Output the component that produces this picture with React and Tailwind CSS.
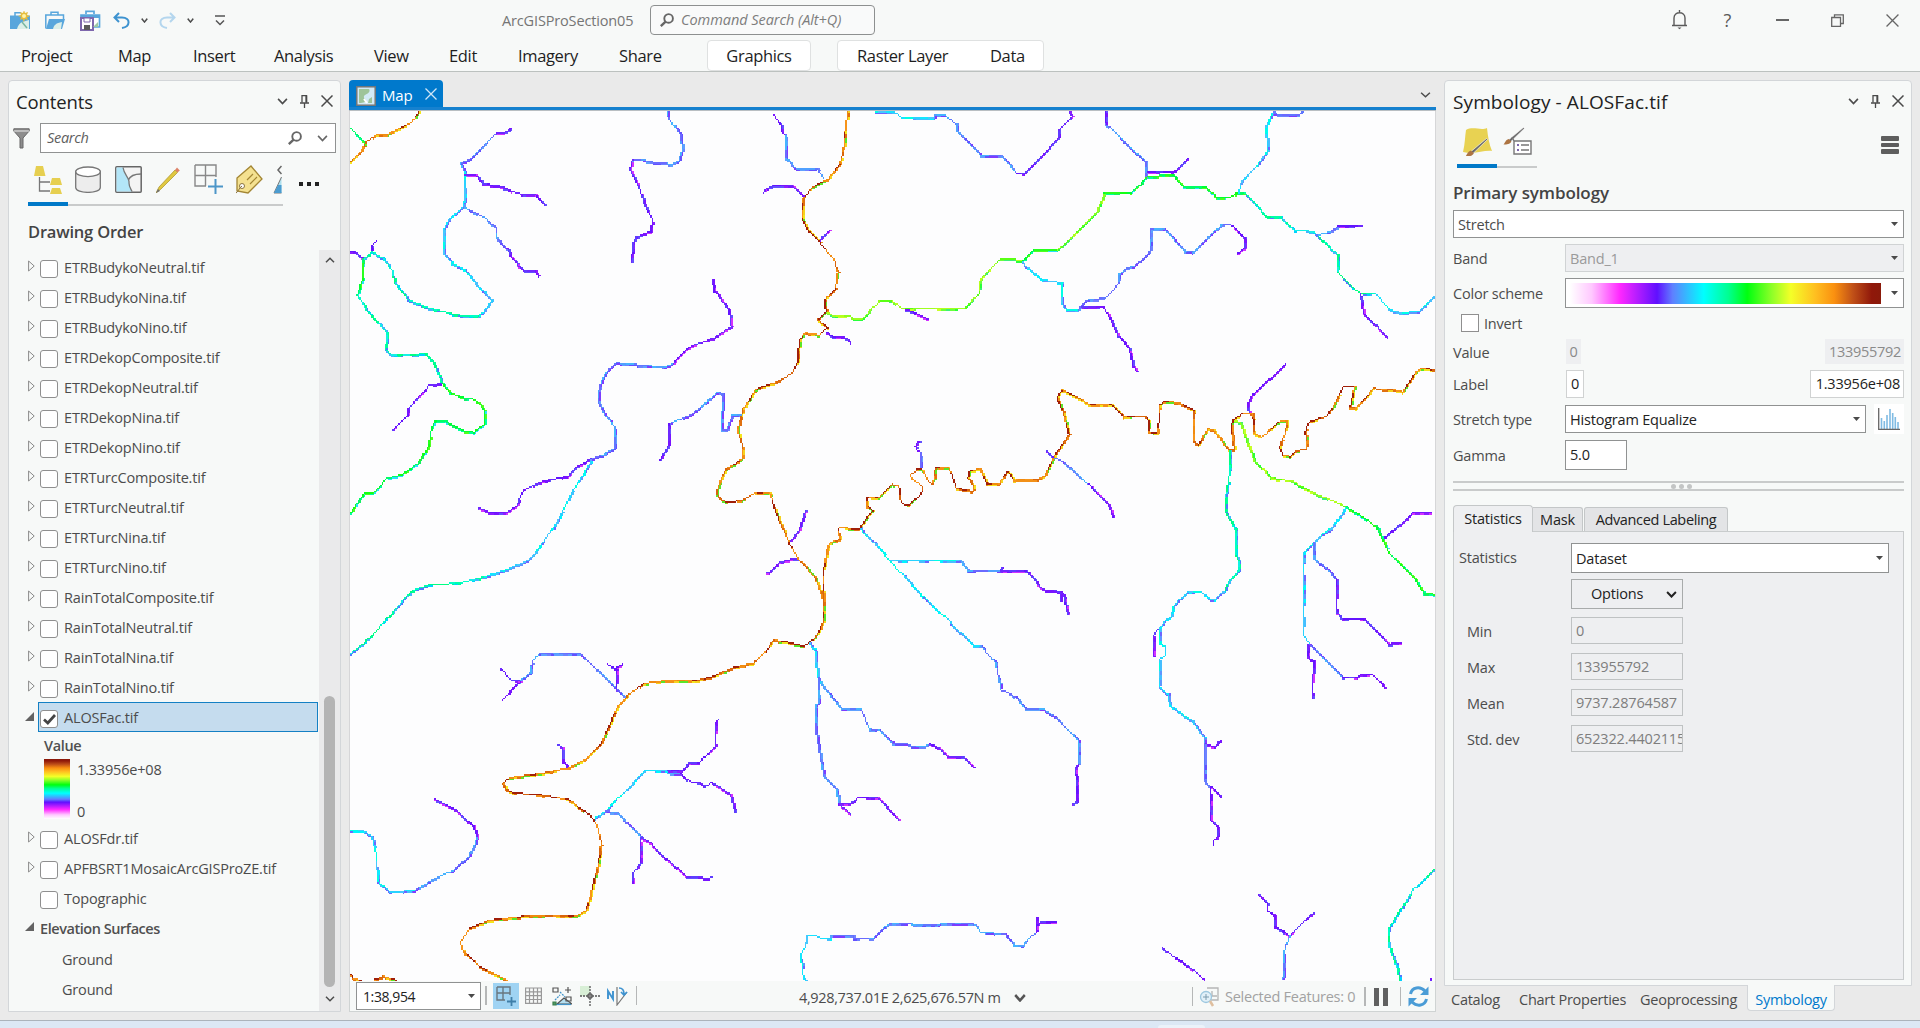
import React from "react";

const RAMP = "#ffffff,#ffc8ff 7%,#ff28ff 16%,#6010ff 28%,#5f80ff 33%,#00ffff 43%,#00ff90 51%,#00ff10 57%,#90ff28 65%,#f4ff28 71%,#ffbe20 79%,#fa9010 85%,#c05018 91%,#90180a 97%,#8a1a0a";

/* ---------- drainage network ---------- */

const PALETTES = {
  R: [["#a01e08", "#f08a10", "#a01e08", "#d8640c", "#f7941a"], ["#f5e61e", "#f29018", "#e07010", "#5ae628", "#f5d21e"]],
  L: [["#8cff1e", "#b4ff1e", "#5aff14", "#a0ff20"], ["#28ff3c", "#c8ff28", "#3cf078", "#6aff3c"]],
  G: [["#00ff32", "#14ff14", "#00ff64", "#28ff1e"], ["#00ffa0", "#14f064", "#28e0ff", "#50ff20"]],
  A: [["#00ffaa", "#00ffc8", "#00ff82", "#14f0e6"], ["#00d2ff", "#46b4ff", "#5078ff", "#00ff96"]],
  C: [["#14e6ff", "#28d2ff", "#00ffe6", "#46c8ff"], ["#5f96ff", "#00f5ff", "#6e64ff", "#46beff"]],
  B: [["#5f78ff", "#50a0ff", "#6a6aff", "#46b4ff"], ["#6450ff", "#5fa0ff", "#7d3cff", "#6e82ff"]],
  V: [["#6414ff", "#6e28ff", "#7814ff", "#5f3cff"], ["#8c1eff", "#6450ff", "#d232ff", "#7814ff"]],
};

// Each sheet covers 560 map pixels in width and stores 2.8 x 3 units per pixel.
const SHEETS = [
  {
    ox: -10.7,
    oy: -11.6,
    lines: [
      "G 28,80 45,102 72,130",
      "R 225,33 200,70 170,85 140,102 105,106 72,130 60,155 28,188",
      "V 483,85 460,98 435,103",
      "B 435,103 410,130 385,160 360,183 338,190 350,215",
      "C 350,215 350,305 345,320",
      "V 350,226 382,226 402,254 440,257 470,268 505,284 548,286 572,316",
      "C 345,320 305,362 291,395 291,460 315,490 350,510 380,550 428,600 405,635 388,650",
      "A 388,650 345,650 300,638 240,622 192,600 155,550 148,515 120,475 92,457 66,478",
      "B 345,320 385,343 405,352 438,385 442,418 470,445",
      "V 470,445 478,468 500,495 525,516 548,516 558,531",
      "V 104,425 93,435 92,452",
      "V 28,457 45,457 66,475",
      "G 66,478 66,535 50,585",
      "A 50,585 75,630 132,700 130,750 145,766 200,766 240,762 262,790 288,852",
      "G 288,852 310,880 340,892 380,900 405,932 405,975 375,998 350,995 295,964 270,962 257,990 250,1040 220,1090 175,1125 130,1138 95,1178 70,1182 45,1215 28,1245",
      "V 284,852 252,857 195,922 190,945 150,990",
      "B 916,33 918,50 955,105 960,150 950,182 930,193 890,190 850,182 820,180",
      "V 820,180 812,210 840,265 855,320 876,355 872,395 830,412 822,430 818,485",
      "V 1043,542 1050,575 1090,630 1097,680 1050,715 975,745 930,795",
      "B 930,795 905,803 800,792 775,790 745,820 728,860 725,905 740,940 772,980 772,1045 740,1065 705,1078",
      "V 705,1078 660,1105 640,1130 560,1148 515,1172 495,1220 470,1238 420,1238 390,1224",
      "C 705,1085 660,1160 610,1265 595,1290",
      "V 1217,45 1235,75 1240,100 1250,105",
      "B 1250,105 1250,175 1280,206 1335,206 1355,235",
      "V 1187,282 1195,267 1218,258 1268,258 1297,290",
      "V 1370,392 1342,425",
      "V 1365,697 1382,712 1415,712 1432,728",
      "L 1365,635 1385,650 1430,650 1440,660 1465,658 1512,603",
      "R 1424,33 1415,100 1410,165 1400,195 1370,235 1320,265 1297,300 1297,360 1315,395 1345,428 1385,480 1395,520 1388,570 1358,600 1362,635 1340,660 1368,683 1342,706 1305,700 1288,720 1282,790 1265,822 1220,848 1165,870 1130,930 1115,990 1128,1035 1126,1080 1085,1105 1068,1140 1055,1185 1080,1208 1130,1203 1160,1180 1205,1182 1222,1240 1243,1290",
      "B 1122,945 1100,945 1085,990 1068,990 1075,885 1060,877 1030,905 985,945 922,973",
      "V 922,973 922,1035 898,1080",
      "V 1306,1232 1295,1265 1285,1295 1262,1322",
      "C 1458,1285 1465,1298",
      "R 1512,1192 1475,1195 1475,1215 1492,1232 1458,1285 1440,1290 1410,1282 1395,1288",
    ],
  },
  {
    ox: 529.3,
    oy: -11.6,
    lines: [
      "C -12,36 40,36 60,55 152,55",
      "B 152,55 155,48 185,48 218,75 218,95 285,167 340,167 385,220",
      "V 385,220 405,220 500,120 502,92 540,50 527,33",
      "V 633,33 633,72",
      "B 633,72 685,125 747,185 748,235",
      "V 752,218 822,218 865,176",
      "L 0,603 38,603 62,627 240,627 278,580 282,540 338,478 380,480 400,484",
      "G 400,484 432,453 500,453",
      "L 500,453 610,335 630,280",
      "G 630,280 706,281 750,230 822,226 852,264 915,264 945,293 980,292 1000,282 1022,282",
      "A 1022,282 1088,352 1122,352 1160,394 1212,395 1285,465 1285,520 1345,583 1390,583",
      "C 1390,583 1425,628 1460,640 1510,635 1557,588",
      "C 1005,280 1015,245 1060,195 1088,150 1080,80 1102,37",
      "B 1102,37 1120,46 1175,46 1188,36",
      "B 1222,405 1245,403 1285,383",
      "V 1285,380 1350,378",
      "V 1345,583 1355,640 1423,712",
      "C 400,488 455,540 510,550 510,615 522,631 556,631",
      "B 556,631 585,598 628,597 668,555 672,525 690,505 718,498 760,450 760,390 797,390 855,455 878,458 920,412 958,375 985,377",
      "V 985,377 1022,415 1022,445 1003,462",
      "V 565,622 628,622 650,665 668,710 700,747 710,800 720,815",
      "V 75,630 100,638 135,660",
      "V 112,1025 98,1040 116,1060",
      "B 116,1060 116,1105",
      "V 467,1052 490,1075",
      "B 490,1075 515,1085 585,1155",
      "V 585,1155 640,1215 655,1250",
      "V 1135,795 1045,885 1030,915 1035,940",
      "A 982,1050 982,1110 970,1190 970,1240 997,1290",
      "L 990,963 1010,968 1030,1030 1050,1085 1095,1135 1160,1147 1230,1187 1310,1222",
      "G 1310,1222 1390,1280 1395,1290",
      "C 1305,1225 1270,1280 1250,1297",
      "V 1542,1238 1495,1240 1415,1312",
      "R 0,1192 35,1155 55,1160 60,1208 78,1218 118,1182 120,1160 85,1132 105,1107 122,1112 135,1142 150,1154 157,1105 192,1105 205,1130 215,1165 260,1175 265,1160 248,1135 252,1115 280,1108 302,1153 335,1153 360,1115 378,1142 440,1140 462,1130 495,1060 530,1005 518,950 497,895 512,870 590,915 650,913 685,953 740,950 752,955 755,1002 780,1002 785,915 795,907 835,908 882,932 880,1025 893,1036 920,988 935,990 975,1050 993,1048 985,985 990,960 1020,940 1045,942 1050,1000 1068,1014 1125,963 1140,965 1138,1000 1120,1040 1130,1068 1150,1070 1165,1053 1195,1050 1193,995 1203,967 1250,950 1270,925 1300,862 1330,860 1318,922 1332,926 1385,867 1440,870 1465,877 1500,820 1518,806 1557,810",
    ],
  },
  {
    ox: -10.7,
    oy: 418.4,
    lines: [
      "C 595,0 570,40 530,90 470,120 400,143",
      "A 400,143 340,160 250,166 205,182 180,210 130,270 100,310 28,375",
      "V 1197,128 1210,125 1230,100 1265,88 1285,88",
      "R 1243,0 1260,45 1285,90 1330,140 1350,195 1355,215",
      "C 1465,6 1500,45 1540,92",
      "R 1395,0 1402,30 1370,42 1362,80 1357,115 1357,270 1340,315 1300,350 1260,338 1215,332 1195,365 1160,400 1100,415 1050,440 1000,453 890,455 850,462 810,495 778,535 750,600 730,645 690,688 640,715 575,730 490,742 465,752 458,763 465,778 485,790 570,797 640,810 700,855 722,890 733,940 725,1000 700,1110 690,1140 668,1160 520,1160 420,1172 365,1195 338,1240 350,1270 395,1310 470,1352",
      "C 1316,340 1335,372 1337,440 1350,465",
      "B 1350,465 1405,537 1460,537 1485,600 1512,602",
      "B 1342,450 1342,520 1332,530 1332,595 1348,690 1356,740 1393,780 1397,822",
      "V 1397,822 1432,822 1455,802 1505,803 1566,870",
      "V 1400,822 1430,852",
      "B 505,455 535,428 540,395 560,370 675,372 770,470 800,500",
      "V 450,415 480,452 505,455 457,511",
      "V 752,404 773,415 793,404",
      "V 775,415 775,480",
      "V 612,646 625,655 626,698 638,712",
      "C 715,867 745,845 855,723 918,723",
      "V 918,723 960,722 978,700 1005,700 1052,652 1052,580 1062,571",
      "B 918,730 955,733",
      "V 955,733 985,758 1012,760 1025,772 1045,758 1095,795 1108,848",
      "B 745,845 775,848 845,925",
      "V 845,925 870,940 920,990 972,1040 1035,1046 1045,1040",
      "V 843,925 843,1003 822,1028 822,1060",
      "V 268,810 325,840 375,890 386,925",
      "B 386,925 360,985 320,1020 260,1052 210,1083",
      "C 210,1083 140,1087 108,1055 102,970 90,920 70,905 28,900",
      "R 28,1332 45,1350 60,1351",
      "R 100,1350 122,1340 157,1351",
      "C 1304,1352 1295,1325 1293,1272 1305,1250 1310,1218 1335,1218 1350,1227 1375,1225",
      "B 1375,1218 1440,1218 1440,1226 1495,1226 1540,1180",
    ],
  },
  {
    ox: 529.3,
    oy: 418.4,
    lines: [
      "C 28,92 225,92",
      "B 225,92 248,122 340,122",
      "V 340,122 410,122 445,165 460,180 508,186 518,205 527,255",
      "V 508,186 508,212",
      "V 338,120 348,113",
      "C 28,92 90,165 150,228 210,290 265,348 285,350",
      "B 285,350 325,400 340,480 378,500 408,537 458,537 490,560 556,632 556,705",
      "V 556,705 548,712 553,760 553,818 540,822",
      "B 0,602 38,643 80,643 90,650 130,650 140,642",
      "V 140,642 168,655 190,683 235,683 262,712",
      "B 28,1180 90,1180 92,1187 168,1185 170,1180 260,1180 285,1208 350,1213 378,1247 400,1247 438,1208",
      "V 438,1208 440,1165",
      "V 438,1190 455,1175 492,1175",
      "A 997,0 998,80 1008,95 1008,122 975,160 965,185",
      "C 965,185 940,210 925,208 900,187 862,187 825,228 815,262 782,295 782,335 800,350 800,375 782,395 782,468 808,495 812,525 875,575 908,622",
      "V 778,300 765,320 765,380",
      "B 908,622 908,750 928,770",
      "V 928,770 928,870 948,895 948,920 935,935 935,948",
      "V 928,770 957,798",
      "V 912,640 935,652 957,632",
      "G 1395,0 1430,75 1500,150 1525,190 1557,195",
      "C 1265,0 1240,12 1185,75 1185,315 1205,345",
      "B 1218,40 1218,85 1250,115 1280,150",
      "V 1278,150 1278,248 1298,267 1355,268 1425,343 1460,340",
      "B 1205,345 1295,443",
      "V 1295,443 1340,444 1345,436 1382,436 1415,475",
      "V 1200,345 1200,382 1215,395 1213,505",
      "V 1060,1095 1088,1125 1088,1145 1105,1155 1107,1190 1150,1218 1217,1148",
      "B 1150,1218 1135,1255 1130,1350",
      "V 793,1255 825,1282 865,1308 908,1350",
      "A 1557,1015 1495,1080 1465,1130 1427,1195 1427,1255 1447,1305 1457,1352",
      "V 1543,1350 1544,1351",
    ],
  },
];

const CELL = 1.5;

function noise(n) {
  const v = Math.sin(n * 127.1 + 11.7) * 43758.5453;
  return v - Math.floor(v);
}

function rasterise() {
  const cells = new Map();
  let tick = 0;
  SHEETS.forEach(({ ox, oy, lines }) => {
    lines.forEach((line) => {
      const [kind, ...pairs] = line.split(" ");
      const [core, fringe] = PALETTES[kind];
      const pts = pairs.map((p) => {
        const [x, y] = p.split(",").map(Number);
        return [(x / 2.8 + ox) / CELL, (y / 3 + oy) / CELL];
      });
      for (let i = 1; i < pts.length; i++) {
        const [x0, y0] = pts[i - 1];
        const [x1, y1] = pts[i];
        const dx = x1 - x0;
        const dy = y1 - y0;
        const steps = Math.max(1, Math.ceil(Math.max(Math.abs(dx), Math.abs(dy))));
        const flat = Math.abs(dx) > Math.abs(dy);
        for (let s = 0; s <= steps; s++) {
          tick++;
          const cx = Math.floor(x0 + (dx * s) / steps);
          const cy = Math.floor(y0 + (dy * s) / steps);
          const run = Math.floor(tick / 5);
          if (noise(Math.floor(tick / 7) + 900) > 0.22) {
            const key = flat ? `${cx},${cy + 1}` : `${cx + 1},${cy}`;
            if (!cells.has(key)) cells.set(key, fringe[Math.floor(noise(Math.floor(tick / 3) + 300) * fringe.length)]);
          }
          cells.set(`${cx},${cy}`, core[Math.floor(noise(run) * core.length)]);
        }
      }
    });
  });
  const byColor = {};
  cells.forEach((color, key) => {
    const [cx, cy] = key.split(",").map(Number);
    byColor[color] = (byColor[color] || "") + `M${cx * CELL} ${cy * CELL}h${CELL}v${CELL}h-${CELL}z`;
  });
  return Object.entries(byColor);
}

const NETWORK = rasterise();

function MapCanvas() {
  return (
    <svg width="1085" height="870" viewBox="0 0 1085 870" className="block bg-[#fdfdfe]" shapeRendering="crispEdges">
      {NETWORK.map(([color, d]) => (
        <path key={color} d={d} fill={color} />
      ))}
    </svg>
  );
}

/* ---------- small shared pieces ---------- */

const Chevron = ({ w = 10, h = 6, color = "#4c4c4c", sw = 1.5 }) => (
  <svg width={w} height={h} viewBox="0 0 10 6" fill="none" stroke={color} strokeWidth={sw} preserveAspectRatio="none">
    <path d="M1 .8L5 4.8L9 .8" />
  </svg>
);
const Caret = () => (
  <svg width="7" height="4" viewBox="0 0 7 4">
    <path d="M0 0h7L3.500 4z" fill="#4a4a4a" />
  </svg>
);
const Cross = ({ s = 12, color = "#4a4a4a", sw = 1.5 }) => (
  <svg width={s} height={s} viewBox="0 0 12 12" stroke={color} strokeWidth={sw}>
    <path d="M.5 .5L11.500 11.500M11.500 .5L.5 11.500" />
  </svg>
);
const Pin = () => (
  <svg width="9" height="13" viewBox="0 0 9 13" fill="none" stroke="#4a4a4a">
    <path d="M2 7.500V.7H6.500V7.500" strokeWidth="1.300" />
    <path d="M6.300 .5V7.500" strokeWidth="1.800" />
    <path d="M0 8H9M4.500 8V13" strokeWidth="1.300" />
  </svg>
);
const Magnifier = ({ s = 14 }) => (
  <svg width={s} height={s} viewBox="0 0 14 14" fill="none" stroke="#666" strokeWidth="1.900">
    <circle cx="8.600" cy="5.400" r="4.300" />
    <path d="M5.600 8.600L.8 13.200" strokeWidth="2.300" />
  </svg>
);
const PaneButtons = () => (
  <div className="mb-[2px] flex items-center">
    <Chevron w={11} h={7} />
    <div className="ml-[12px] mr-[12px]"><Pin /></div>
    <Cross />
  </div>
);
const Brush = () => (
  <g>
    <path d="M21.500 .5L22.500 1.500L8 15.500L6 13.500z" fill="#6a6a6a" stroke="#fff" strokeWidth=".6" />
    <path d="M6 12.500L8.800 15.200C7.500 18 4 18.500 .5 18.500C2 17 2.500 13.500 6 12.500z" fill="#ad7442" />
  </g>
);

/* ---------- title bar ---------- */

function TitleBar() {
  return (
    <div className="flex h-[38px] items-center">
      <div className="flex w-[225px] shrink-0 items-center pl-[10px] pt-[2px]">
        <svg className="shrink-0" width="20" height="19" viewBox="0 0 20 19">
          <path d="M0 4.500H20V18H0z" fill="#58a6dc" />
          <path d="M5 5V1.800H11" fill="none" stroke="#58a6dc" strokeWidth="1.500" />
          <path d="M7 18C8 14 10 12 12 11L19 9V18z" fill="#dcefe8" />
          <path d="M12 11L17 17" stroke="#7ab7a0" strokeWidth="1.500" />
          <path d="M14 -1L15 2L18 1L17 4L20 5L17 6.500L18 9L15 8L14 11L12.500 8L10 9L11 6L8 5L11 4L10 1L13 2z" fill="#e4bd3e" />
          <circle cx="14" cy="5" r="2" fill="#fff3a8" />
        </svg>
        <svg className="ml-[15px] shrink-0" width="20" height="19" viewBox="0 0 20 19">
          <path d="M.8 17.500V4H18.500V8M6 4V1.300H13V4" fill="none" stroke="#58a6dc" strokeWidth="1.500" />
          <path d="M4 8H20L17 18H1z" fill="#58a6dc" />
          <path d="M8 18C9 14 11 12 17 11L16 18z" fill="#dcefe8" />
        </svg>
        <svg className="ml-[15px] shrink-0" width="21" height="21" viewBox="0 0 21 21">
          <path d="M1 16V5H19.500V17H12M6 4V1.300H14V4" fill="#fff" stroke="#58a6dc" strokeWidth="1.700" />
          <path d="M1 5H19V8H1z" fill="#58a6dc" />
          <rect x="1" y="8" width="12" height="12" fill="#fff" stroke="#7e67ad" strokeWidth="2" />
          <path d="M4 8H10V12H4z" fill="#fff" stroke="#7e67ad" />
          <path d="M4 15H10V20H4z" fill="#5a5a5a" />
          <path d="M13 17L18 12V17z" fill="#9dc9a4" />
        </svg>
        <svg className="ml-[12px] shrink-0" width="17" height="17" viewBox="0 0 17 17" fill="none" stroke="#3e93d0" strokeWidth="2">
          <path d="M6 1L1.500 5.500L6 10M1.500 5.500H9C18 5.500 17.500 14.500 9 16" />
        </svg>
        <div className="ml-[11px]"><Chevron w={7} h={5} sw={2} /></div>
        <svg className="ml-[11px] shrink-0" width="17" height="17" viewBox="0 0 17 17" fill="none" stroke="#b4d6ee" strokeWidth="2">
          <path d="M11 1L15.500 5.500L11 10M15.500 5.500H8C-1 5.500 -.5 14.500 8 16" />
        </svg>
        <div className="ml-[11px]"><Chevron w={7} h={5} sw={2} /></div>
        <svg className="ml-[21px] shrink-0" width="10" height="11" viewBox="0 0 10 11" fill="none" stroke="#555" strokeWidth="1.500">
          <path d="M0 1H10M1 5.500L5 9.500L9 5.500" />
        </svg>
      </div>
      <div className="ml-[277px] mt-[4px] w-[148px] whitespace-nowrap text-[14.500px] tracking-[-0.15px] text-[#757575]">ArcGISProSection05</div>
      <div className="mt-[2px] flex h-[30px] w-[225px] items-center rounded-[4px] border border-[#8d9090] bg-[#f9fafa] pl-[9px]">
        <Magnifier />
        <span className="ml-[7px] whitespace-nowrap text-[14.500px] italic tracking-[-0.05px] text-[#7d7d7d]">Command Search (Alt+Q)</span>
      </div>
      <div className="ml-auto mt-[2px] flex items-center pr-[21px]">
        <svg className="mr-px" width="17" height="20" viewBox="0 0 17 20" fill="none" stroke="#5a5a5a" strokeWidth="1.400">
          <path d="M1 15.500H16M3 15.500V8C3 1 14 1 14 8V15.500M8.500 0V3" />
          <path d="M6.500 17.500H10.500L8.500 19.300z" fill="#5a5a5a" stroke="none" />
        </svg>
        <span className="ml-[34px] w-[9px] text-center text-[18px] leading-none text-[#5a5a5a]">?</span>
        <div className="ml-[44px] h-[1.500px] w-[13px] bg-[#666]" />
        <svg className="ml-[42px]" width="13" height="13" viewBox="0 0 13 13" fill="none" stroke="#666" strokeWidth="1.300">
          <path d="M.7 3.500H9.500V12.300H.7zM3.500 3.500V.8H12.300V9.500H9.500" />
        </svg>
        <div className="ml-[42px]"><Cross s={13} color="#666" sw={1.2} /></div>
      </div>
    </div>
  );
}

const MENU = [
  ["Project", "w-[97px]"],
  ["Map", "w-[75px]"],
  ["Insert", "w-[81px]"],
  ["Analysis", "w-[100px]"],
  ["View", "w-[75px]"],
  ["Edit", "w-[69px]"],
  ["Imagery", "w-[101px]"],
  ["Share", "w-[88px]"],
];

function Ribbon() {
  return (
    <div className="flex h-[33px] items-start pl-[21px] pt-[2px] text-[16.500px] tracking-[-0.35px] text-[#1e1e1e]">
      {MENU.map(([label, w]) => (
        <div key={label} className={`${w} h-[30px] leading-[32px]`}>{label}</div>
      ))}
      <div className="flex h-[31px] w-[104px] items-center justify-center rounded-[4px] border border-[#dfe1e1] bg-white pt-px">Graphics</div>
      <div className="ml-[26px] flex h-[31px] w-[207px] items-center rounded-[4px] border border-[#dfe1e1] bg-white pl-[19px] pt-px">
        <span className="w-[133px]">Raster Layer</span>
        <span>Data</span>
      </div>
    </div>
  );
}

/* ---------- contents pane ---------- */

const LAYERS = [
  "ETRBudykoNeutral.tif", "ETRBudykoNina.tif", "ETRBudykoNino.tif", "ETRDekopComposite.tif", "ETRDekopNeutral.tif",
  "ETRDekopNina.tif", "ETRDekopNino.tif", "ETRTurcComposite.tif", "ETRTurcNeutral.tif", "ETRTurcNina.tif",
  "ETRTurcNino.tif", "RainTotalComposite.tif", "RainTotalNeutral.tif", "RainTotalNina.tif", "RainTotalNino.tif",
];

const Expander = ({ open }) =>
  open ? (
    <svg width="10" height="9" viewBox="0 0 10 9"><path d="M9 0V9H0z" fill="#636363" /></svg>
  ) : (
    <svg className="ml-[3px]" width="7" height="12" viewBox="0 0 7 12" fill="none" stroke="#8a8a8a"><path d="M.6 1V11L6.200 6z" /></svg>
  );

const Box = ({ checked }) => (
  <div className="flex h-[18px] w-[18px] shrink-0 items-center justify-center rounded-[3px] border border-[#8f8f8f] bg-white">
    {checked && (
      <svg width="13" height="11" viewBox="0 0 13 11" fill="none" stroke="#444" strokeWidth="2.700"><path d="M1 5.500L4.800 9L12 1" /></svg>
    )}
  </div>
);

function Layer({ name, leaf, open, selected }) {
  return (
    <div className="flex h-[30px] items-center">
      <div className="mb-[2px] w-[13px]">{!leaf && <Expander open={open} />}</div>
      <div className={selected ? "flex h-[30px] w-[280px] items-center border border-[#1480c4] bg-[#c5dcee] pl-px" : "flex h-[30px] w-[280px] items-center pl-[2px]"}>
        <div className="mt-[4px]"><Box checked={selected} /></div>
        <span className="ml-[6px] mt-px whitespace-nowrap">{name}</span>
      </div>
    </div>
  );
}

function ContentsTabs() {
  return (
    <div className="mt-[8px] h-[46px]">
      <div className="flex h-[41px] items-center pb-[5px] pl-[25px]">
        <svg width="28" height="29" viewBox="0 0 28 29">
          <path d="M2 1H9L11.500 11H0zM18 13H26L28 20H16zM18 23H26L28 29H16z" fill="#e6cf50" />
          <path d="M5.500 12V26H16M5.500 17H16" fill="none" stroke="#777" strokeWidth="1.300" />
        </svg>
        <svg className="ml-[13px]" width="26" height="27" viewBox="0 0 26 27">
          <path d="M.7 5.500V21.500C.7 28 25.300 28 25.300 21.500V5.500z" fill="#ededed" stroke="#777" strokeWidth="1.300" />
          <ellipse cx="13" cy="5.800" rx="12.300" ry="4.800" fill="#fff" stroke="#777" strokeWidth="1.300" />
        </svg>
        <svg className="ml-[14px]" width="27" height="27" viewBox="0 0 27 27">
          <rect x=".8" y=".8" width="25.400" height="25.400" rx="1" fill="#f4f4f4" stroke="#666" strokeWidth="1.500" />
          <path d="M1.500 1.500H8C9 9 15 12 14 17C14 21 16 23 17 25.500H1.500z" fill="#b3e6f8" />
          <path d="M8 1.500C9 9 15 12 14 17C14 21 16 23 17 25.500M13.500 14C15 10 20 8 26 8" fill="none" stroke="#777" strokeWidth="1.300" />
        </svg>
        <svg className="ml-[14px]" width="25" height="27" viewBox="0 0 25 27">
          <path d="M0 27L3 21L19 4L21.500 6.500L5 23z" fill="#e0c840" stroke="#a89128" strokeWidth=".7" />
          <path d="M0 27L2 23L4 25z" fill="#6f6f6f" />
          <path d="M19 4L21 1.500L23.800 4.500L21.500 6.500z" fill="#dd8368" />
        </svg>
        <svg className="ml-[13px]" width="30" height="30" viewBox="0 0 30 30" fill="none" stroke="#888" strokeWidth="1.400">
          <path d="M1 1H22V13M1 1V22H12M11.500 1V22M1 11.500H22" />
          <path d="M21.500 15V30M14 22.500H29" stroke="#4d96c8" strokeWidth="2" />
        </svg>
        <svg className="ml-[11px]" width="28" height="29" viewBox="0 0 28 29">
          <path d="M2 13L16 1L27 14L13 28L2 26z" fill="#f4e190" stroke="#a38634" strokeWidth="1.300" />
          <path d="M12 15L18 9M15 19L22 12" stroke="#a38634" strokeWidth="1.200" />
          <circle cx="7" cy="21" r="2.500" fill="#fff" stroke="#8a7340" />
          <path d="M1 28C3 27 4 23 7 21" fill="none" stroke="#8a7340" />
        </svg>
        <svg className="ml-[10px]" width="9" height="29" viewBox="0 0 9 29">
          <path d="M8.500 1L5 5L8.500 9" fill="none" stroke="#666" strokeWidth="1.500" />
          <path d="M8.500 12L1 28H8.500" fill="#aee0ee" stroke="#777" />
          <path d="M8.500 20H5L1 28H8.500z" fill="#4b9cd0" />
        </svg>
        <div className="ml-[17px] mt-[10px] flex gap-[4px]">
          <i className="h-[4px] w-[4px] bg-[#222]" />
          <i className="h-[4px] w-[4px] bg-[#222]" />
          <i className="h-[4px] w-[4px] bg-[#222]" />
        </div>
      </div>
      <div className="ml-[19px] flex h-[4px] w-[255px] items-end">
        <div className="h-[4px] w-[40px] bg-[#0079c8]" />
        <div className="h-[2px] flex-1 bg-[#c9cbcb]" />
      </div>
    </div>
  );
}

function Contents() {
  return (
    <div className="flex h-[932px] w-[333px] flex-col rounded-t-[4px] border border-[#d3d6d9] bg-[#f7f9f8]">
      <div className="flex h-[42px] items-center justify-between pl-[7px] pr-[7px]">
        <span className="text-[18.500px] tracking-[-0.1px] text-[#222]">Contents</span>
        <PaneButtons />
      </div>
      <div className="flex h-[30px] items-center pl-[4px]">
        <svg width="17" height="21" viewBox="0 0 17 21" fill="#8d8d8d" stroke="#666"><path d="M.8 .8H16.200V3L10 10V20H7V10L.8 3z" /><path d="M1 3H16" stroke="#eee" /></svg>
        <div className="ml-[10px] flex h-[30px] w-[296px] items-center border border-[#909292] bg-white pl-[6px] pr-[7px]">
          <span className="flex-1 text-[14.500px] italic tracking-[-0.3px] text-[#5e5e5e]">Search</span>
          <Magnifier />
          <div className="ml-[15px]"><Chevron w={11} h={7} color="#666" /></div>
        </div>
      </div>
      <ContentsTabs />
      <div className="mt-[5px] flex h-[38px] items-center pl-[19px] pt-[3px] text-[16.500px] font-semibold tracking-[-0.2px] text-[#444]">Drawing Order</div>
      <div className="flex min-h-0 flex-1">
        <div className="w-[310px] pl-[16px] pt-[2px] text-[14.500px] tracking-[-0.18px] text-[#4c4c4c]">
          {LAYERS.map((name) => <Layer key={name} name={name} />)}
          <Layer name="ALOSFac.tif" open selected />
          <div className="flex h-[27px] items-center pl-[19px] font-semibold tracking-[-0.35px] text-[#505050]">Value</div>
          <div className="flex h-[64px] pl-[19px]">
            <div className="h-[60px] w-[26px]" style={{ background: `linear-gradient(to top, ${RAMP})` }} />
            <div className="ml-[7px] flex h-[64px] flex-col justify-between">
              <span className="leading-[22px]">1.33956e+08</span>
              <span className="leading-[22px]">0</span>
            </div>
          </div>
          <Layer name="ALOSFdr.tif" />
          <Layer name="APFBSRT1MosaicArcGISProZE.tif" />
          <Layer name="Topographic" leaf />
          <div className="flex h-[30px] items-center pt-px font-semibold tracking-[-0.45px] text-[#505050]">
            <div className="mb-[4px] w-[15px]"><Expander open /></div>
            Elevation Surfaces
          </div>
          <div className="flex h-[30px] items-center pl-[37px] pt-[3px]">Ground</div>
          <div className="flex h-[30px] items-center pl-[37px] pt-[3px]">Ground</div>
        </div>
        <div className="flex flex-1 flex-col items-center bg-[#eaeaeb]">
          <div className="mt-[7px] rotate-180"><Chevron w={10} h={6} /></div>
          <div className="mt-[433px] h-[291px] w-[11px] rounded-full bg-[#b4b4b4]" />
          <div className="mt-[9px]"><Chevron w={10} h={6} /></div>
        </div>
      </div>
    </div>
  );
}

/* ---------- map view ---------- */

const Rule = () => <div className="h-[19px] w-[1.500px] bg-[#b5b7b7]" />;

function MapView() {
  return (
    <div className="ml-[8px] w-[1087px]">
      <div className="flex h-[27px] items-end">
        <div className="flex h-[27px] w-[94px] items-center rounded-t-[4px] bg-[#0079cc] pl-[7px] pt-[4px]">
          <svg width="20" height="20" viewBox="0 0 20 20">
            <rect x=".8" y=".8" width="18.400" height="18.400" fill="#d3eaf6" stroke="#777" strokeWidth="1.500" />
            <path d="M3 3H13C15 6 11 8 9 9C7 10 8 13 10 14C10 16 8 17 3 17z" fill="#9ec49a" />
            <path d="M13 13L16 11V17H12z" fill="#9ec49a" />
            <path d="M8 13L11 17" stroke="#fff" strokeWidth="2" />
          </svg>
          <span className="ml-[6px] text-[15px] tracking-[-0.2px] text-white">Map</span>
          <div className="ml-auto mr-[6px] mt-[-3px]"><Cross color="#cfe6f7" sw={1.3} /></div>
        </div>
        <div className="mb-[9px] ml-auto mr-[5px]"><Chevron w={11} h={6} sw={1.3} /></div>
      </div>
      <div className="h-[3px] bg-[#1681cf]" />
      <div className="h-px bg-[#b9bec2]" />
      <div className="flex border-x border-[#d6d6d8]"><MapCanvas /></div>
      <div className="flex h-[31px] items-start border-x border-b border-[#cfd3d3] bg-[#f7f9f8] pl-[6px] pt-px">
        <div className="flex h-[28px] w-[125px] items-center justify-between border border-[#909292] bg-white pl-[6px] pr-[5px]">
          <span className="text-[14px] tracking-[-0.400px] text-[#222]">1:38,954</span>
          <Caret />
        </div>
        <div className="ml-[4px] mt-[4px]"><Rule /></div>
        <div className="ml-[6px] mt-px flex h-[26px] w-[26px] items-center justify-center bg-[#9fd3f3]">
          <svg width="20" height="20" viewBox="0 0 20 20" fill="none" stroke="#68767f" strokeWidth="1.400"><path d="M1 1H14V9M1 1V14H9M7 1V14M1 7H14" /><path d="M15.500 11V20M11 15.500H20" stroke="#3f7fa9" strokeWidth="1.800" /></svg>
        </div>
        <svg className="ml-[6px] mt-[5px]" width="17" height="17" viewBox="0 0 17 17" fill="none" stroke="#999" strokeWidth="1.200"><path d="M.6 1H16.400V16.400H.6zM4.500 1V16.400M8.500 1V16.400M12.500 1V16.400M.6 4.800H16.400M.6 8.600H16.400M.6 12.500H16.400" /></svg>
        <svg className="ml-[10px] mt-[4px]" width="20" height="20" viewBox="0 0 20 20" fill="none" stroke="#555" strokeWidth="1.200">
          <path d="M5 18L12 12L20 18z" fill="#b5dff0" />
          <path d="M1 2H6V6H1zM14 11H19V15H14zM16 1V7M13 4H19" />
          <path d="M3 14L8 9M8 6L13 11" stroke="#4294ca" strokeWidth="1.300" strokeDasharray="2 1" />
          <path d="M4 18.500H19" stroke="#4294ca" />
          <path d="M1 16H4V19H1z" fill="#4e9b61" stroke="#3c7f4d" />
        </svg>
        <svg className="ml-[8px] mt-[4px]" width="20" height="20" viewBox="0 0 20 20"><path d="M0 0H10V10H0z" fill="#d8efd6" /><path d="M10 0V20M0 10H20" stroke="#555" strokeWidth="1.300" strokeDasharray="2 1" /><path d="M8 8H12V12H8z" fill="#888" stroke="#555" /></svg>
        <svg className="ml-[7px] mt-[4px]" width="21" height="20" viewBox="0 0 21 20" fill="none"><path d="M1 13V5L6 13V5" stroke="#3e93d0" strokeWidth="1.900" /><path d="M10 1V19L20 6" stroke="#777" strokeWidth="1.200" /><path d="M12 2C16 2 17 4 17 8M14 6L17 9L20 6" stroke="#3e93d0" strokeWidth="1.700" /></svg>
        <div className="ml-[8px] mt-[4px]"><Rule /></div>
        <div className="ml-[162px] mt-[6px] w-[215px] whitespace-nowrap text-[14.500px] leading-[20px] tracking-[-0.35px] text-[#4c4c4c]">4,928,737.01E 2,625,676.57N m</div>
        <div className="mt-[12px]"><Chevron w={12} h={8} color="#555" sw={2.1} /></div>
        <div className="ml-auto mt-[4px] flex items-center pr-[6px]">
          <Rule />
          <svg className="ml-[6px]" width="20" height="20" viewBox="0 0 20 20" fill="none"><path d="M8 1H19V13H12M13 4V9H18" stroke="#b5b5b5" strokeWidth="1.300" /><circle cx="7" cy="10" r="5.500" fill="#e1f0f8" stroke="#9cc7df" strokeWidth="1.300" /><path d="M7 7V13M4 10H10" stroke="#7c9cae" /><path d="M11 14L14 19" stroke="#dfbf9f" strokeWidth="2.500" /></svg>
          <span className="ml-[6px] w-[139px] whitespace-nowrap text-[14.500px] tracking-[-0.25px] text-[#a2a2a2]">Selected Features: 0</span>
          <Rule />
          <div className="ml-[8px] flex gap-[4px]"><i className="h-[18px] w-[5px] bg-[#606060]" /><i className="h-[18px] w-[5px] bg-[#606060]" /></div>
          <div className="ml-[12px]"><Rule /></div>
          <svg className="ml-[7px]" width="21" height="21" viewBox="0 0 21 21" fill="none" stroke="#4a9cd6" strokeWidth="3">
            <path d="M2.500 8C4 1 12 0 17 5M18.500 13C17 20 9 21 4 16" /><path d="M20.500 .5V9H12zM.5 20.500V12H9z" fill="#4a9cd6" stroke="none" />
          </svg>
        </div>
      </div>
    </div>
  );
}

/* ---------- symbology pane ---------- */

function Select({ value, className, muted }) {
  return (
    <div className={`flex items-center justify-between border pl-[4px] pr-[5px] ${muted ? "border-[#d0d3d4] bg-[#eeeff1] text-[#9a9a9a]" : "border-[#909292] bg-white"} ${className}`}>
      <span className="pt-px">{value}</span>
      <Caret />
    </div>
  );
}

const STATS = [["Min", "0"], ["Max", "133955792"], ["Mean", "9737.28764587"], ["Std. dev", "652322.4402115"]];

function StatisticsPanel() {
  return (
    <div className="mt-[14px] flex flex-1 flex-col text-[#222]">
      <div className="flex h-[26px] items-end">
        <div className="relative z-10 mb-[-1px] flex h-[27px] w-[80px] items-center justify-center rounded-t-[4px] border border-b-0 border-[#c4c7c8] bg-[#eeeff1]">Statistics</div>
        <div className="flex h-[24px] w-[50px] items-center justify-center rounded-tr-[3px] border border-b-0 border-l-0 border-[#c4c7c8] bg-[#e3e4e6] pt-px">Mask</div>
        <div className="ml-px flex h-[24px] w-[144px] items-center justify-center rounded-t-[3px] border border-b-0 border-[#c4c7c8] bg-[#e3e4e6] pt-px tracking-[-0.35px]">Advanced Labeling</div>
      </div>
      <div className="h-[449px] border border-[#c9cccd] bg-[#eeeff1] pl-[5px] pt-[11px]">
        <div className="flex items-center">
          <span className="w-[112px] text-[#4c4c4c]">Statistics</span>
          <Select value="Dataset" className="h-[30px] w-[318px]" />
        </div>
        <div className="ml-[112px] mt-[6px] flex h-[30px] w-[112px] items-center border border-[#a8abab] pl-[19px]">
          <span className="w-[75px]">Options</span>
          <Chevron w={11} h={7} color="#222" sw={1.8} />
        </div>
        <div className="mt-[8px] flex flex-col gap-[9px] pl-[8px]">
          {STATS.map(([k, v]) => (
            <div key={k} className="flex h-[27px] items-center">
              <span className="w-[104px] pt-[2px] text-[#4c4c4c]">{k}</span>
              <span className="flex h-[27px] w-[112px] items-center overflow-hidden border border-[#bfc2c3] pl-[4px] tracking-[-0.18px] text-[#7e7e7e]">{v}</span>
            </div>
          ))}
        </div>
      </div>
    </div>
  );
}

function Symbology() {
  return (
    <div className="ml-[8px] w-[468px]">
      <div className="flex h-[906px] flex-col rounded-t-[4px] border border-[#d3d6d9] bg-[#f7f9f8] pl-[8px] pr-[7px] text-[14.500px] tracking-[-0.2px] text-[#4c4c4c]">
        <div className="flex h-[42px] shrink-0 items-center justify-between">
          <span className="text-[19px] tracking-[0.1px] text-[#222]">Symbology - ALOSFac.tif</span>
          <PaneButtons />
        </div>
        <div className="flex h-[46px] shrink-0 justify-between">
          <div className="pl-[4px] pt-[4px]">
            <div className="flex h-[37px] gap-[11px] pl-[6px]">
              <svg width="29" height="29" viewBox="0 0 29 29"><path d="M3 3C10 -1 18 4 24 1C25 10 26 17 29 24C20 23 12 28 0 25C2 17 2 9 3 3z" fill="#e8d252" /><g transform="translate(2,11)"><Brush /></g></svg>
              <svg width="29" height="29" viewBox="0 0 29 29"><g transform="scale(.95)"><Brush /></g><path d="M11 14H28V27H11zM11 14L9 10" fill="#fff" stroke="#777" strokeWidth="1.400" /><path d="M14 17H16V19H14zM14 22H16V24H14z" fill="#7e67ad" /><path d="M18 18H26M18 23H26" stroke="#777" strokeWidth="1.300" /></svg>
            </div>
            <div className="flex h-[4px] w-[80px] items-end"><div className="h-[4px] w-[40px] bg-[#0079c8]" /><div className="h-[2px] w-[40px] bg-[#c9cbcb]" /></div>
          </div>
          <div className="mr-[5px] mt-[13px] flex flex-col gap-[2px]">
            <i className="h-[5px] w-[18px] rounded-[1px] bg-[#5e5e5e]" /><i className="h-[4px] w-[18px] rounded-[1px] bg-[#5e5e5e]" /><i className="h-[5px] w-[18px] rounded-[1px] bg-[#5e5e5e]" />
          </div>
        </div>
        <div className="flex h-[41px] shrink-0 items-center pt-[7px] text-[17px] font-semibold tracking-[-0.1px] text-[#444]">Primary symbology</div>
        <Select value="Stretch" className="h-[28px] w-[451px] shrink-0" />
        <div className="mt-[6px] flex h-[28px] shrink-0 items-center">
          <span className="w-[112px] pt-px">Band</span>
          <Select value="Band_1" muted className="h-[28px] flex-1" />
        </div>
        <div className="mt-[6px] flex h-[30px] shrink-0 items-center">
          <span className="w-[112px] pt-px">Color scheme</span>
          <div className="flex h-[30px] flex-1 items-center justify-between border border-[#909292] bg-white pl-[4px] pr-[5px]">
            <div className="h-[21px] w-[311px]" style={{ background: `linear-gradient(to right, ${RAMP})` }} />
            <Caret />
          </div>
        </div>
        <div className="mt-[6px] flex h-[18px] shrink-0 items-center pl-[8px]">
          <div className="h-[18px] w-[18px] border border-[#8f8f8f] bg-white" />
          <span className="ml-[5px] pt-px">Invert</span>
        </div>
        <div className="mt-[7px] flex h-[25px] shrink-0 items-center">
          <span className="w-[113px] pt-[2px]">Value</span>
          <span className="flex h-[25px] w-[15px] items-center justify-center bg-[#eeeff1] text-[#8a8a8a]">0</span>
          <span className="ml-auto flex h-[25px] w-[79px] items-center justify-end bg-[#eeeff1] pr-[3px] tracking-[-0.3px] text-[#8a8a8a]">133955792</span>
        </div>
        <div className="mt-[6px] flex h-[28px] shrink-0 items-center text-[#222]">
          <span className="w-[113px] pt-px text-[#4c4c4c]">Label</span>
          <span className="flex h-[28px] w-[18px] items-center justify-center border border-[#d0d2d2] bg-white">0</span>
          <span className="ml-auto flex h-[28px] w-[94px] items-center justify-end border border-[#d0d2d2] bg-white pr-[3px]">1.33956e+08</span>
        </div>
        <div className="mt-[6px] flex h-[30px] shrink-0 items-center text-[#222]">
          <span className="w-[112px] pt-px text-[#4c4c4c]">Stretch type</span>
          <Select value="Histogram Equalize" className="h-[28px] w-[301px]" />
          <div className="ml-auto flex h-[30px] w-[30px] items-center justify-center bg-white">
            <svg width="22" height="22" viewBox="0 0 22 22" fill="none"><path d="M3.500 21V10M6.300 21V13M9 21V7M12 21V1M14.700 21V5M17.300 21V9M20 21V14" stroke="#7fbbe3" strokeWidth="1.600" /><path d="M.7 0V21.300H22" stroke="#666" strokeWidth="1.300" /></svg>
          </div>
        </div>
        <div className="mt-[6px] flex h-[30px] shrink-0 items-center">
          <span className="w-[112px] pt-[2px]">Gamma</span>
          <span className="flex h-[30px] w-[62px] items-center border border-[#909292] bg-white pl-[4px] text-[#222]">5.0</span>
        </div>
        <div className="mt-[11px] flex h-[10px] shrink-0 items-center justify-center gap-[3px] border-y-2 border-[#c9cbcb] pl-[6px]">
          <i className="h-[5px] w-[5px] rounded-full bg-[#c3c5c5]" /><i className="h-[5px] w-[5px] rounded-full bg-[#c3c5c5]" /><i className="h-[5px] w-[5px] rounded-full bg-[#c3c5c5]" />
        </div>
        <StatisticsPanel />
      </div>
      <div className="flex h-[25px] items-center pl-[7px] text-[14.500px] tracking-[-0.25px] text-[#4c4c4c]">
        <span className="w-[68px] pt-[3px]">Catalog</span>
        <span className="w-[121px] whitespace-nowrap pt-[3px]">Chart Properties</span>
        <span className="w-[107px] pt-[3px]">Geoprocessing</span>
        <span className="mt-[-1px] flex h-[26px] w-[88px] items-center justify-center rounded-b-[4px] border border-t-0 border-[#d3d6d9] bg-[#f7f9f8] pt-[4px] text-[#0079cc]">Symbology</span>
      </div>
    </div>
  );
}

export default function App() {
  return (
    <div className="flex h-[1028px] w-[1920px] flex-col overflow-hidden bg-[#eaeaea] font-['Open_Sans','Noto_Sans',sans-serif]">
      <div className="h-[72px] shrink-0 border-b border-[#bcc1bf] bg-[#f7f9f8]">
        <TitleBar />
        <Ribbon />
      </div>
      <div className="flex h-[948px] shrink-0 items-start pl-[8px] pt-[8px]">
        <Contents />
        <MapView />
        <Symbology />
      </div>
      <div className="flex flex-1 items-end border-t border-[#abb3bb] bg-[#dce8f5] pl-[1158px]">
        <div className="h-[3px] w-[47px] rounded-t-[3px] bg-[#ebf2fa]" />
      </div>
    </div>
  );
}
